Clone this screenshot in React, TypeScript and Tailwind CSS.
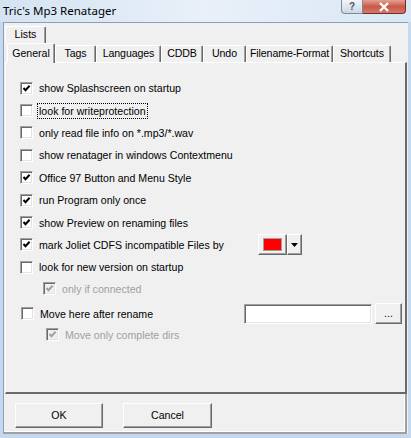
import React from "react";

const raised =
  "border border-t-white border-l-white border-r-[#696969] border-b-[#696969] shadow-[inset_-1px_-1px_0_#a0a0a0]";
const sunken =
  "border border-t-[#a0a0a0] border-l-[#a0a0a0] border-r-white border-b-white shadow-[inset_1px_1px_0_#696969,inset_-1px_-1px_0_#e3e3e3]";

function Check({ on, disabled }: { on?: boolean; disabled?: boolean }) {
  return (
    <span
      className={`flex h-[13px] w-[13px] shrink-0 items-center justify-center ${sunken} ${
        disabled ? "bg-[#f0f0f0]" : "bg-white"
      }`}
    >
      {on ? (
        <svg width="9" height="9" viewBox="0 0 9 9" aria-hidden>
          <path
            d="M1.5 4 L3.5 6.2 L7.6 1.8"
            fill="none"
            stroke={disabled ? "#a0a0a0" : "#000"}
            strokeWidth="2"
          />
        </svg>
      ) : null}
    </span>
  );
}

type RowProps = {
  label: string;
  on?: boolean;
  focus?: boolean;
  disabled?: boolean;
  children?: React.ReactNode;
  className?: string;
};

function Row({ label, on, focus, disabled, children, className = "" }: RowProps) {
  return (
    <div className={`flex items-center ${className}`}>
      <Check on={on} disabled={disabled} />
      <span
        className={`ml-[5px] px-[1px] leading-[14px] ${
          focus ? "outline-1 outline-dotted outline-black" : ""
        } ${disabled ? "text-[#a0a0a0]" : "text-black"}`}
      >
        {label}
      </span>
      {children}
    </div>
  );
}

const tabs = [
  { name: "General", w: "w-[48px]", sel: true },
  { name: "Tags", w: "w-[41px]" },
  { name: "Languages", w: "w-[65px]" },
  { name: "CDDB", w: "w-[42px]" },
  { name: "Undo", w: "w-[43px]" },
  { name: "Filename-Format", w: "w-[87px]" },
  { name: "Shortcuts", w: "w-[58px]" },
];

export default function App() {
  return (
    <div
      className="flex h-[438px] w-[411px] flex-col bg-[#c4d9ef] text-[10.6px]"
      style={{ fontFamily: '"Liberation Sans", Arial, sans-serif' }}
    >
      {/* title bar */}
      <div className="relative flex h-[22px] items-center bg-gradient-to-r from-[#d4e3f3] via-[#e9f0f9] to-[#d9e7f5] pl-[3px]">
        <span
          className="text-[11.5px] text-black"
          style={{ fontFamily: '"Noto Sans", "Open Sans", sans-serif' }}
        >
          Tric&apos;s Mp3 Renatager
        </span>
        <div className="absolute right-[5px] top-0 flex h-[14px]">
          <div className="flex w-[22px] items-center justify-center rounded-bl-[4px] border border-t-0 border-[#7f8b9c] bg-gradient-to-b from-[#f2f5f9] to-[#cdd7e3] text-[10px] font-bold leading-none text-[#4a5668]">
            ?
          </div>
          <div className="flex w-[43px] items-center justify-center rounded-br-[4px] border border-l-0 border-t-0 border-[#7a2a22] bg-gradient-to-b from-[#e39f93] via-[#c95a48] to-[#d2786a]">
            <svg width="12" height="10" viewBox="0 0 12 10" aria-hidden>
              <path d="M2 1 L10 9 M10 1 L2 9" stroke="#fff" strokeWidth="2.4" />
            </svg>
          </div>
        </div>
      </div>

      {/* client area */}
      <div className="mb-[4px] ml-[3px] mr-[3px] flex flex-1 flex-col border-l border-t border-[#8c9fb6] bg-[#f0f0f0]">
        <div className="flex flex-col pl-[1px] pr-[1px] pt-[3px]">
          <div className="flex">
            <div className="flex h-[17px] w-[41px] items-center justify-center rounded-t-[2px] border border-b-0 border-t-white border-l-white border-r-[#696969] shadow-[inset_-1px_0_0_#a0a0a0]">
              Lists
            </div>
          </div>
          <div className="flex h-[19px] items-end pl-[2px]">
            {tabs.map((t) =>
              t.sel ? (
                <div
                  key={t.name}
                  className={`relative z-10 -mb-[1px] flex h-[20px] ${t.w} items-start justify-center rounded-t-[2px] border border-b-0 border-t-white border-l-white border-r-[#696969] bg-[#f0f0f0] pt-[2px] shadow-[inset_-1px_0_0_#a0a0a0]`}
                >
                  {t.name}
                </div>
              ) : (
                <div
                  key={t.name}
                  className={`flex h-[17px] ${t.w} items-center justify-center whitespace-nowrap rounded-t-[2px] border border-b-0 border-t-white border-l-white border-r-[#696969] tracking-[-0.1px] shadow-[inset_-1px_0_0_#a0a0a0]`}
                >
                  {t.name}
                </div>
              )
            )}
          </div>

          {/* tab panel */}
          <div className="flex h-[332px] flex-col border border-b-2 border-r-2 border-t-white border-l-white border-r-[#696969] border-b-[#696969] pl-[14px] pt-[14px]">
            <div className="flex flex-col">
              <Row className="h-[22.4px]" label="show Splashscreen on startup" on />
              <Row className="h-[22.4px]" label="look for writeprotection" focus />
              <Row className="h-[22.4px]" label="only read file info on *.mp3/*.wav" />
              <Row className="h-[22.4px]" label="show renatager in windows Contextmenu" />
              <Row className="h-[22.4px]" label="Office 97 Button and Menu Style" on />
              <Row className="h-[22.4px]" label="run Program only once" on />
              <Row className="h-[22.4px]" label="show Preview on renaming files" on />
              <Row className="h-[22.4px]" label="mark Joliet CDFS incompatible Files by" on>
                <div className="ml-auto mr-[103px] flex h-[21px]">
                  <div className={`flex w-[29px] items-center justify-center ${raised}`}>
                    <span className="h-[13px] w-[19px] border border-[#a0a0a0] bg-[#ff0000]" />
                  </div>
                  <div className={`flex w-[15px] items-center justify-center ${raised}`}>
                    <svg width="7" height="4" viewBox="0 0 7 4" aria-hidden>
                      <path d="M0 0 H7 L3.5 4 Z" fill="#000" />
                    </svg>
                  </div>
                </div>
              </Row>
              <Row className="h-[22.4px]" label="look for new version on startup" />
              <Row className="h-[20px] pl-[23px]" label="only if connected" on disabled />
              <Row className="mt-[4px] h-[22px] pl-[1px]" label="Move here after rename">
                <div className="ml-auto mr-[3px] flex h-[21px] items-center">
                  <div className={`h-[20px] w-[128px] bg-white ${sunken}`} />
                  <div className={`ml-[3px] flex h-[21px] w-[27px] items-end justify-center pb-[4px] leading-none ${raised}`}>
                    ...
                  </div>
                </div>
              </Row>
              <Row className="h-[20px] pl-[26px]" label="Move only complete dirs" on disabled />
            </div>
          </div>
        </div>

        {/* button bar */}
        <div className="mr-[1px] flex flex-1 items-start gap-[20px] border-b-2 border-r-2 border-b-[#a0a0a0] border-r-[#a0a0a0] pl-[11px] pt-[9px] shadow-[inset_-1px_-1px_0_white]">
          <button type="button" className={`flex h-[25px] w-[88px] items-center justify-center ${raised}`}>
            OK
          </button>
          <button type="button" className={`flex h-[25px] w-[89px] items-center justify-center ${raised}`}>
            Cancel
          </button>
        </div>
      </div>
    </div>
  );
}
